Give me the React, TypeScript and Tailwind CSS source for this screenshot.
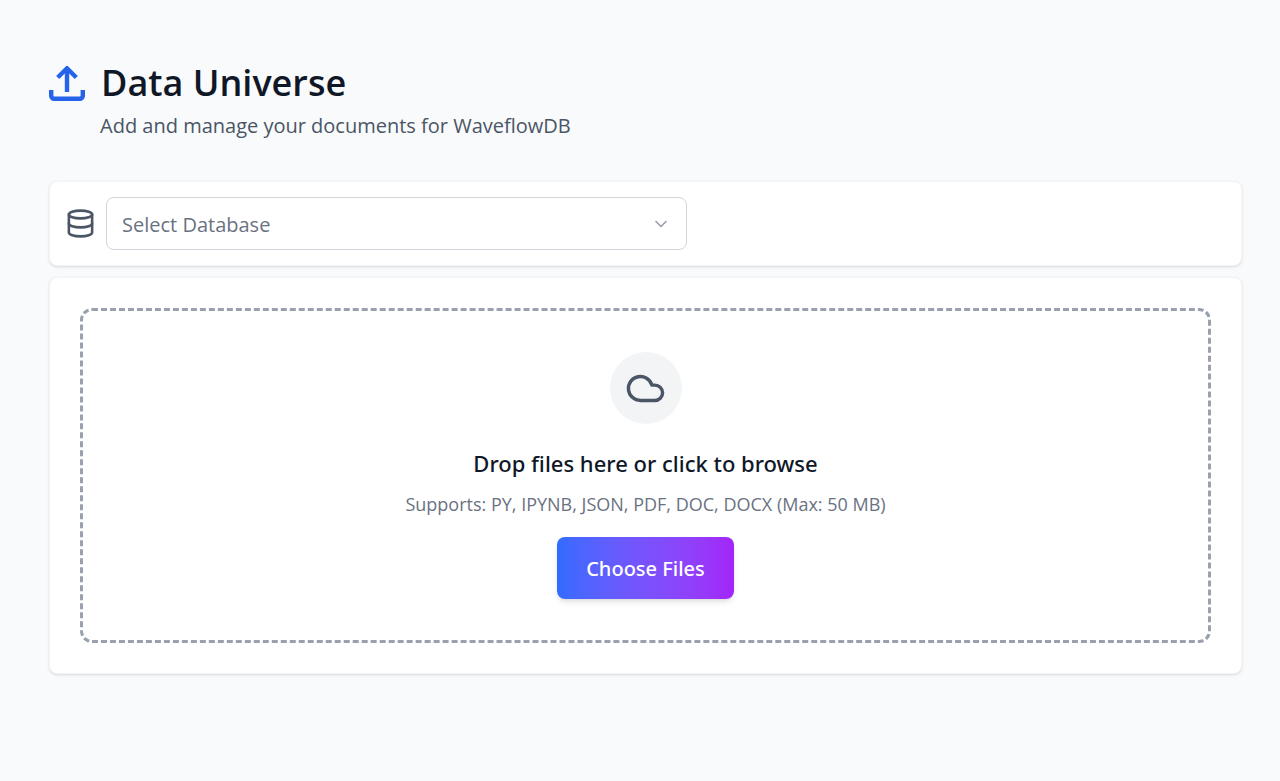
import { useRef, useState } from "react"
import { ChevronDown, Cloud, Database } from "lucide-react"

const databases = ["Documents", "Notebooks", "Reports"]

function UploadIcon() {
    return (
        <svg width={36} height={36} viewBox="0 0 36 36" fill="none" stroke="currentColor" strokeWidth={4.4} strokeLinejoin="round" aria-hidden="true" className="shrink-0">
            <path d="M2.200 25v5.800a3 3 0 0 0 3 3h25.600a3 3 0 0 0 3-3V25" />
            <path d="M18 27V3.500" />
            <path d="M8.700 12.500 18 3.200l9.300 9.300" />
        </svg>
    )
}

function DatabasePicker() {
    const [database, setDatabase] = useState("")

    return (
        <div className="flex items-center gap-[10px] rounded-lg border border-gray-100 bg-white py-[15px] pr-4 pl-[15px] shadow">
            <label htmlFor="database" aria-label="Database" className="shrink-0 text-gray-600">
                <Database size={31} />
            </label>
            <div className="relative w-full max-w-[581px]">
                <select
                    id="database"
                    className="h-[53px] w-full cursor-pointer appearance-none rounded-lg border border-gray-300 bg-white px-[15px] pt-0.5 text-[20px] leading-7 text-gray-500 outline-0"
                    value={database}
                    onChange={(e) => setDatabase(e.target.value)}
                >
                    <option value="">Select Database</option>
                    {databases.map((name) => (
                        <option key={name} value={name}>
                            {name}
                        </option>
                    ))}
                </select>
                <ChevronDown size={20} className="pointer-events-none absolute inset-y-0 right-4 my-auto text-gray-400" />
            </div>
        </div>
    )
}

function DropZone() {
    const inputRef = useRef<HTMLInputElement>(null)

    return (
        <div className="rounded-lg border border-gray-100 bg-white p-[30px] shadow">
            <div className="flex flex-col items-center rounded-xl border-3 border-dashed border-gray-400 py-[41px] text-center">
                <div className="grid size-[72px] place-items-center rounded-full bg-gray-100 text-gray-600">
                    <Cloud size={41} />
                </div>
                <h2 className="mt-[23px] font-['Noto_Sans',sans-serif] text-[22px] leading-8 font-medium text-gray-900">Drop files here or click to browse</h2>
                <p className="mt-3 text-[18px] leading-[26px] text-gray-500">Supports: PY, IPYNB, JSON, PDF, DOC, DOCX (Max: 50 MB)</p>
                <input
                    ref={inputRef}
                    type="file"
                    multiple
                    accept=".py,.ipynb,.json,.pdf,.doc,.docx"
                    aria-label="Files"
                    className="hidden"
                />
                <button
                    type="button"
                    onClick={() => inputRef.current?.click()}
                    className="mt-5 h-[62px] cursor-pointer rounded-lg bg-linear-to-r from-[#2f6bff] to-[#a324f9] px-[29px] pt-0.5 font-['Noto_Sans',sans-serif] text-[20px] leading-7 font-medium text-white shadow-md"
                >
                    Choose Files
                </button>
            </div>
        </div>
    )
}

export default function App() {
    return (
        <main className="min-h-screen bg-gray-50 pt-[60px] pr-[38px] pb-12 pl-[49px] font-['Open_Sans','Noto_Sans',sans-serif]">
            <header className="mb-10">
                <div className="flex items-center gap-4 text-[#2563eb]">
                    <UploadIcon />
                    <h1 className="text-[36px] leading-[46px] font-semibold text-gray-900">Data Universe</h1>
                </div>
                <p className="mt-[5px] ml-[51px] text-[20px] leading-[30px] text-gray-600">Add and manage your documents for WaveflowDB</p>
            </header>
            <div className="flex flex-col gap-[11px]">
                <DatabasePicker />
                <DropZone />
            </div>
        </main>
    )
}
